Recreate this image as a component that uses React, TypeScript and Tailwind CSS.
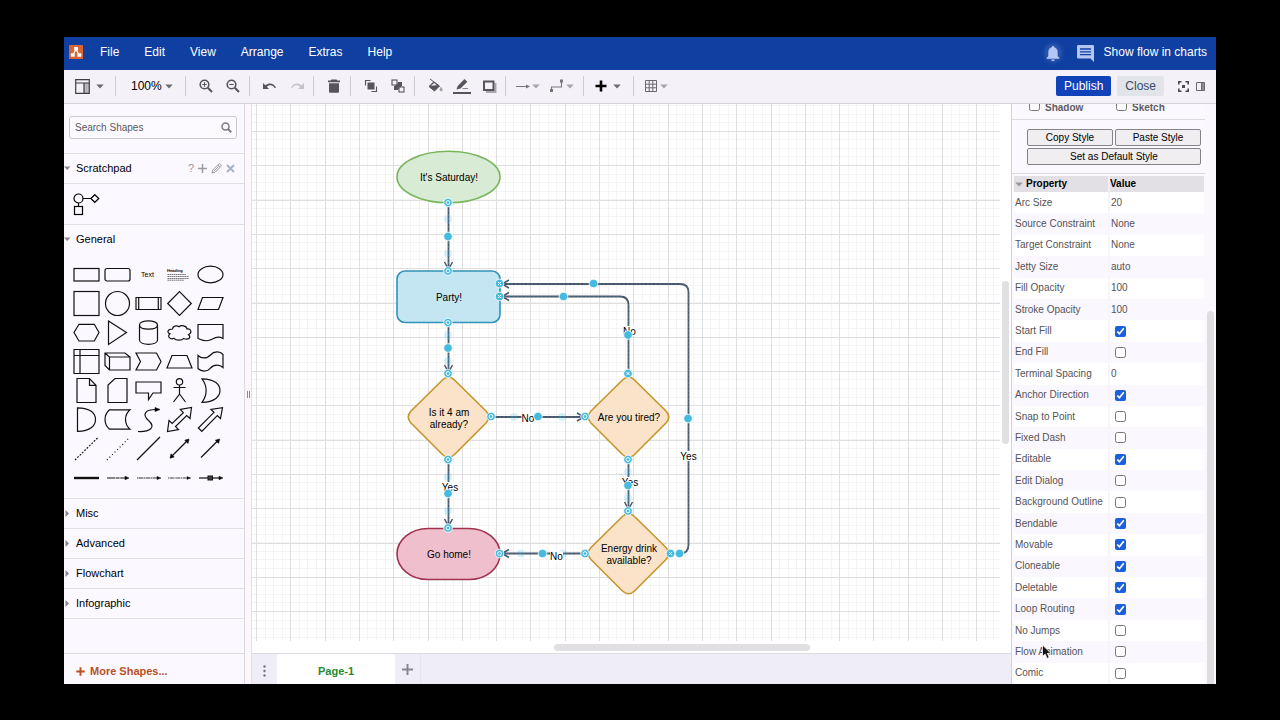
import { useState, type ReactNode } from 'react'

const FONT = "font-['Liberation_Sans',Arial,sans-serif]"

// ---------- data ----------

const MENUS = ['File', 'Edit', 'View', 'Arrange', 'Extras', 'Help']

type Property = { name: string; value: string | boolean }

const PROPERTIES: Property[] = [
  { name: 'Arc Size', value: '20' },
  { name: 'Source Constraint', value: 'None' },
  { name: 'Target Constraint', value: 'None' },
  { name: 'Jetty Size', value: 'auto' },
  { name: 'Fill Opacity', value: '100' },
  { name: 'Stroke Opacity', value: '100' },
  { name: 'Start Fill', value: true },
  { name: 'End Fill', value: false },
  { name: 'Terminal Spacing', value: '0' },
  { name: 'Anchor Direction', value: true },
  { name: 'Snap to Point', value: false },
  { name: 'Fixed Dash', value: false },
  { name: 'Editable', value: true },
  { name: 'Edit Dialog', value: false },
  { name: 'Background Outline', value: false },
  { name: 'Bendable', value: true },
  { name: 'Movable', value: true },
  { name: 'Cloneable', value: true },
  { name: 'Deletable', value: true },
  { name: 'Loop Routing', value: true },
  { name: 'No Jumps', value: false },
  { name: 'Flow Animation', value: false },
  { name: 'Comic', value: false },
]

// every shape is drawn in a 31x29 cell
const SHAPES: { name: string; art: ReactNode }[] = [
  { name: 'Rectangle', art: <rect x="3" y="8.5" width="25" height="12.5" /> },
  { name: 'Rounded Rectangle', art: <rect x="3" y="8.5" width="25" height="12.5" rx="2" /> },
  {
    name: 'Text',
    art: <text x="14.5" y="17" fontSize="7" textAnchor="middle" fill="#000" stroke="none">Text</text>,
  },
  {
    name: 'Textbox',
    art: (
      <>
        <text x="3" y="11.5" fontSize="4" fontWeight="bold" fill="#000" stroke="none">Heading</text>
        <path d="M3.5 14.5H22M3.5 16.5H25M3.5 18.5H25M3.5 20.2H20" strokeWidth=".9" strokeDasharray="1.6 .5" opacity=".65" />
      </>
    ),
  },
  { name: 'Ellipse', art: <ellipse cx="15.5" cy="14.5" rx="12.5" ry="8.3" /> },
  { name: 'Square', art: <rect x="3" y="2.5" width="25" height="24" /> },
  { name: 'Circle', art: <circle cx="15.5" cy="14.5" r="12" /> },
  { name: 'Process', art: <path d="M3 8.5H28V20.5H3ZM5.7 8.5V20.5M25.3 8.5V20.5" /> },
  { name: 'Diamond', art: <path d="M15.5 2.7 27.3 14.5 15.5 26.3 3.7 14.5Z" /> },
  { name: 'Parallelogram', art: <path d="M7.5 8.5H28L23.5 20.5H3Z" /> },
  { name: 'Hexagon', art: <path d="M8 6.3H23.3L28 14.5 23.3 23H8L3 14.5Z" /> },
  { name: 'Triangle', art: <path d="M6.5 3 24.5 14.5 6.5 26.5Z" /> },
  {
    name: 'Cylinder',
    art: <path d="M6.5 7V22C6.5 27.8 24.5 27.8 24.5 22V7C24.5 1.5 6.5 1.5 6.5 7C6.5 12.5 24.5 12.5 24.5 7" />,
  },
  {
    name: 'Cloud',
    art: <path d="M8.5 11C3.5 11 2.5 14.5 6 15.8C2.5 18.5 6.5 22 10 20.3C12 22.8 18 22.8 19.5 20.5C25 22.5 27.5 19 24.5 16.7C28.5 14.5 27 10.5 23 11C22.5 7.5 17 6.8 15 8.7C12.5 7 8.5 8 8.5 11Z" />,
  },
  { name: 'Document', art: <path d="M3 6.5H28V20.5C21.5 16.5 18 21.5 15.5 21.8C10 24.5 6 21.5 3 20.5Z" /> },
  { name: 'Internal Storage', art: <path d="M3 2.5H28V26.5H3ZM3 8.5H28M9 2.5V26.5" /> },
  { name: 'Cube', art: <path d="M3 6H23L28 10V23H7.5L3 18.5ZM3 6 7.5 10V23M7.5 10H28" /> },
  { name: 'Step', art: <path d="M3 6H23.5L28 14.5 23.5 23H3L7.5 14.5Z" /> },
  { name: 'Trapezoid', art: <path d="M8 8.5H23L28 21H3Z" /> },
  { name: 'Tape', art: <path d="M3 8.5C6 11.5 12 12 15.5 8C19 4 25 4 28 7.5V20.5C25 17.5 19 17 15.5 21C12 25.5 6 24.5 3 21.5Z" /> },
  { name: 'Note', art: <path d="M6 2.5H18.5L25 9.3V26.5H6ZM18.5 2.5V9.3H25" /> },
  { name: 'Card', art: <path d="M13 2.5H25V26.5H6V9Z" /> },
  { name: 'Callout', art: <path d="M3 6H28V17H20L15.5 23.5V17H3Z" /> },
  {
    name: 'Actor',
    art: (
      <>
        <circle cx="15.5" cy="5.8" r="3.2" />
        <path d="M15.5 9V18L9.5 26M15.5 18 21.5 26M9.5 11.5H21.5" />
      </>
    ),
  },
  { name: 'Or', art: <path d="M7 2.8C20 2.8 25 9 25 14.5C25 20 20 26.3 7 26.3C12.5 19 12.5 10 7 2.8Z" /> },
  { name: 'And', art: <path d="M6.5 2.8C20 2.8 24.5 9 24.5 14.5C24.5 20 20 26.3 6.5 26.3Z" /> },
  { name: 'Data Storage', art: <path d="M7.5 4.8H28C22 10 22 19 28 24.2H7.5C1.5 19 1.5 10 7.5 4.8Z" /> },
  {
    name: 'Curve',
    art: (
      <>
        <path d="M5 26.5C17 27 23.5 22.5 15.5 15.5C8.5 9 12.5 4.5 23 4.5" />
        <path d="M22 2.5 27 4.5 22 6.5Z" fill="#000" strokeWidth=".6" />
      </>
    ),
  },
  { name: 'Bidirectional Arrow', art: <path d="M27.5 2.5 26 13.5 22.7 10.5 11.5 21.5 14.5 24.5 3.5 26.5 5 15.5 8.2 18.5 19.3 7.7 16.3 4.5Z" /> },
  { name: 'Arrow', art: <path d="M27.5 2.7 25.5 13.5 22.3 10.5 6.8 26.3 3.3 23 19 7.3 16 4.5Z" /> },
  { name: 'Dashed Line', art: <path d="M4 26 27 3.5" strokeDasharray="1.8 1.5" /> },
  { name: 'Dotted Line', art: <path d="M5 26 27 4" strokeDasharray="1 2.6" /> },
  { name: 'Line', art: <path d="M4 26 27 3" /> },
  {
    name: 'Bidirectional Connector',
    art: (
      <>
        <path d="M7 23 24 6" />
        <path d="M25 5 24 9.4 20.8 6.2ZM6 24.2 7 19.8 10.2 23Z" fill="#000" strokeWidth=".6" />
      </>
    ),
  },
  {
    name: 'Directional Connector',
    art: (
      <>
        <path d="M6 23.5 23.5 6" />
        <path d="M24.7 5 23.5 9.4 20.3 6.2Z" fill="#000" strokeWidth=".6" />
      </>
    ),
  },
  { name: 'Link', art: <path d="M3 15H28" strokeWidth="2.4" /> },
  {
    name: 'Connector with Label',
    art: (
      <>
        <path d="M5 15H24" strokeDasharray="8 .6 4 .6" />
        <path d="M23 13.2 27 15 23 16.8Z" fill="#000" strokeWidth=".5" />
      </>
    ),
  },
  {
    name: 'Connector with 2 Labels',
    art: (
      <>
        <path d="M4 15H24" strokeDasharray="1 .5 5 .5" opacity=".85" />
        <path d="M24 13.4 28 15 24 16.6Z" fill="#000" strokeWidth=".5" />
      </>
    ),
  },
  {
    name: 'Connector with 3 Labels',
    art: (
      <>
        <path d="M4 15H27" strokeDasharray="1.2 .6 4 .6" opacity=".8" />
        <path d="M23 13.6 26 15 23 16.4Z" fill="#000" strokeWidth=".5" />
      </>
    ),
  },
  {
    name: 'Connector with Symbol',
    art: (
      <>
        <path d="M4 15H24" />
        <rect x="13" y="13" width="4.5" height="4" fill="#444" strokeWidth="1" />
        <path d="M24 13.2 28 15 24 16.8Z" fill="#000" strokeWidth=".5" />
      </>
    ),
  },
]

// ---------- small pieces ----------

function Caret({ className = 'text-[#6b6a6e]' }: { className?: string }) {
  return (
    <svg width="8" height="5" viewBox="0 0 8 5" className={`shrink-0 ${className}`} fill="currentColor">
      <path d="M0.3 0.4H7.7L4 4.6Z" />
    </svg>
  )
}

function Separator() {
  return <div className="ml-[3px] mr-[6px] h-5 w-px shrink-0 bg-[#cfcbd1]" />
}

function ToolButton({ label, children }: { label: string; children: ReactNode }) {
  return (
    <button aria-label={label} className="flex h-6 w-[27px] shrink-0 items-center justify-center text-[#56555a]">
      <svg width="18" height="18" viewBox="0 0 18 18" fill="none" stroke="currentColor">
        {children}
      </svg>
    </button>
  )
}

function Header() {
  return (
    <header className="flex h-[33px] shrink-0 items-center bg-[#0f3fa0] pb-[3px] pl-[5px] pr-[9px] text-xs text-white">
      <svg width="14" height="14" viewBox="0 0 14 14">
        <rect width="14" height="14" rx="1" fill="#d96532" />
        <path d="M7 4 4 10M7 4 10 10" stroke="#fff" strokeWidth="1.2" />
        <rect x="5.2" y="2" width="3.8" height="3.6" rx=".5" fill="#fff" />
        <rect x="1.8" y="8.2" width="3.9" height="3.6" rx=".5" fill="#fff" />
        <rect x="8.4" y="8.2" width="3.9" height="3.6" rx=".5" fill="#fff" />
      </svg>
      <nav className="ml-[17px] flex gap-[25px]">
        {MENUS.map((menu) => (
          <button key={menu}>{menu}</button>
        ))}
      </nav>
      <div className="ml-auto flex items-center">
        <button aria-label="Notifications" className="mt-[2px] rounded-full bg-[#4a72c4]/40 shadow-[0_0_4px_1px_#4a72c466]">
          <svg width="16" height="18" viewBox="0 0 16 18" fill="#b4c6f2">
            <path d="M8 2c.9 0 1.3.6 1.3 1.3C11.7 4 12.7 6 12.7 8.3V12.2L14.5 14V14.8H1.5V14L3.3 12.2V8.3C3.3 6 4.3 4 6.7 3.3 6.7 2.6 7.1 2 8 2ZM6.3 15.5H9.7C9.7 17.6 6.3 17.6 6.3 15.5Z" />
          </svg>
        </button>
        <button aria-label="Comments" className="ml-4 mt-[2px]">
          <svg width="17" height="17" viewBox="0 0 17 17">
            <path d="M1.2 0H15.8Q17 0 17 1.2V17L13.5 13.5H1.2Q0 13.5 0 12.3V1.2Q0 0 1.2 0Z" fill="#b4c6f2" />
            <path d="M3 4H14M3 6.8H14M3 9.6H14" stroke="#0f3fa0" strokeWidth="1.3" />
          </svg>
        </button>
        <span className="ml-[10px]">Show flow in charts</span>
      </div>
    </header>
  )
}

function Toolbar() {
  return (
    <div className="flex h-[34px] shrink-0 items-center border-b border-[#d4d1d6] bg-[#f5f1f8] pb-px pr-[11px]">
      <button aria-label="View layout" className="flex h-6 w-12 shrink-0 items-center gap-[6px] pl-[11px]">
        <svg width="15" height="15" viewBox="0 0 15 15" fill="none" stroke="#3f3e42" strokeWidth="1.2">
          <rect x="9" y="4" width="5" height="10" fill="#b9b7bc" stroke="none" />
          <path d="M.7.7H14.3V14.3H.7ZM.7 4H14.3M9 4V14.3" />
        </svg>
        <Caret />
      </button>
      <Separator />
      <button className="flex h-6 w-[60px] shrink-0 items-center gap-[3px] pl-[9px] text-xs text-black">
        100%
        <Caret />
      </button>
      <Separator />
      <ToolButton label="Zoom In">
        <circle cx="7.5" cy="7.5" r="4.3" strokeWidth="1.6" />
        <path d="M10.8 10.8 15 15" strokeWidth="2" />
        <path d="M5.3 7.5H9.7M7.5 5.3V9.7" strokeWidth="1.1" />
      </ToolButton>
      <ToolButton label="Zoom Out">
        <circle cx="7.5" cy="7.5" r="4.3" strokeWidth="1.6" />
        <path d="M10.8 10.8 15 15" strokeWidth="2" />
        <path d="M5.3 7.5H9.7" strokeWidth="1.1" />
      </ToolButton>
      <Separator />
      <ToolButton label="Undo">
        <path d="M2 6V12H8L5.8 9.8C9 7.3 12 8 13.8 11.2L15 10.6C13 6.5 8.5 5 4.3 8.3Z" fill="currentColor" stroke="none" />
      </ToolButton>
      <ToolButton label="Redo">
        <path d="M16 6V12H10L12.2 9.8C9 7.3 6 8 4.2 11.2L3 10.6C5 6.5 9.5 5 13.7 8.3Z" fill="#c6c3c9" stroke="none" />
      </ToolButton>
      <Separator />
      <ToolButton label="Delete">
        <path d="M6.5 2.5H11.5L12.3 3.5H15V5.3H3V3.5H5.7ZM4 6.3H14V14.5Q14 15.7 12.8 15.7H5.2Q4 15.7 4 14.5Z" fill="currentColor" stroke="none" />
      </ToolButton>
      <Separator />
      <ToolButton label="To Front">
        <path d="M8.5 3.5H3.5V8.5M9.5 14.5H14.5V9.5" strokeWidth="1.1" />
        <rect x="5.5" y="5.5" width="7" height="7" fill="currentColor" stroke="none" />
      </ToolButton>
      <ToolButton label="To Back">
        <path d="M9 6H12V9M6 9V12H9" strokeWidth="2" />
        <rect x="6.5" y="6.5" width="5.5" height="5.5" fill="currentColor" stroke="none" />
        <rect x="3" y="3" width="5" height="5" fill="#f5f1f8" strokeWidth="1.1" />
        <rect x="10" y="10" width="5" height="5" fill="#f5f1f8" strokeWidth="1.1" />
      </ToolButton>
      <Separator />
      <ToolButton label="Fill Color">
        <path d="M4 2 7.8 4.8 13.5 9 8.5 14 3 9.5 7.8 4.8" fill="currentColor" strokeWidth="1" />
        <path d="M5 8.7 8 5.9 10.8 8.2Z" fill="#f5f1f8" stroke="none" />
        <path d="M15 9.5C17.5 13 17 14.3 15.2 14.3S13 13 15 9.5Z" fill="#a5a3a9" stroke="none" />
      </ToolButton>
      <ToolButton label="Line Color">
        <path d="M3.5 12.5 4.7 9 11.5 2 14.3 4.7 7.5 11.5Z" fill="currentColor" stroke="none" />
        <path d="M9.5 11.5H15" strokeWidth=".7" />
        <path d="M0 16H18" strokeWidth="2" />
      </ToolButton>
      <ToolButton label="Shadow">
        <path d="M6 15H15.5V6" strokeWidth="2" stroke="#a9a7ac" />
        <rect x="4" y="4.5" width="9.5" height="8.5" strokeWidth="2" />
      </ToolButton>
      <Separator />
      <button aria-label="Connection" className="flex h-6 w-[34px] shrink-0 items-center gap-px pl-[3px]">
        <svg width="16" height="14" viewBox="0 0 16 14" stroke="#77757a" fill="#77757a">
          <path d="M1 7.5H11" />
          <path d="M11 5.5 15 7.5 11 9.5Z" stroke="none" />
        </svg>
        <Caret className="text-[#a7a4aa]" />
      </button>
      <button aria-label="Waypoints" className="flex h-6 w-[34px] shrink-0 items-center gap-px pl-[3px]">
        <svg width="16" height="14" viewBox="0 0 16 14" stroke="#77757a" fill="none">
          <path d="M2.5 11V8H12.5V3" strokeWidth="1.1" />
          <rect x="1.5" y="10.5" width="2" height="2" fill="#77757a" />
          <rect x="11.5" y="1" width="2" height="2" fill="#77757a" />
        </svg>
        <Caret className="text-[#a7a4aa]" />
      </button>
      <Separator />
      <button aria-label="Insert" className="flex h-6 w-10 shrink-0 items-center gap-[6px] pl-[5px]">
        <svg width="12" height="12" viewBox="0 0 12 12" stroke="#000" strokeWidth="2.6">
          <path d="M6 .5V11.5M.5 6H11.5" />
        </svg>
        <Caret />
      </button>
      <Separator />
      <button aria-label="Table" className="flex h-6 w-10 shrink-0 items-center gap-[3px] pl-[5px]">
        <svg width="12" height="12" viewBox="0 0 12 12" stroke="#6b6a6e" fill="none">
          <path d="M.5.5H11.5V11.5H.5ZM4.2.5V11.5M7.8.5V11.5M.5 4.2H11.5M.5 7.8H11.5" />
        </svg>
        <Caret className="text-[#a7a4aa]" />
      </button>
      <div className="ml-auto flex items-center">
        <button className="h-5 rounded-[2px] bg-[#1142b8] px-2 text-xs text-white">Publish</button>
        <button className="ml-[6px] h-5 rounded-[2px] bg-[#e1e5ea] px-2 text-xs text-[#3b4a66]">Close</button>
        <button aria-label="Fullscreen" className="ml-[14px]">
          <svg width="11" height="11" viewBox="0 0 11 11" fill="none" stroke="#4a494d" strokeWidth="1.6">
            <path d="M.8 3.5V.8H3.5M7.5.8H10.2V3.5M10.2 7.5V10.2H7.5M3.5 10.2H.8V7.5" />
            <rect x="4" y="4" width="3" height="3" fill="#4a494d" stroke="none" />
          </svg>
        </button>
        <button aria-label="Format panel" className="ml-[7px]">
          <svg width="9" height="9" viewBox="0 0 9 9" fill="none" stroke="#6a696d">
            <rect x="5.5" y="1" width="3" height="7" fill="#8d8b91" stroke="none" />
            <path d="M.5.5H8.5V8.5H.5ZM5.5.5V8.5" />
          </svg>
        </button>
      </div>
    </div>
  )
}

function SectionTitle({ title, open = false }: { title: string; open?: boolean }) {
  return (
    <button className="flex h-[29px] flex-1 items-center text-[11px] text-black">
      <svg width="7" height="7" viewBox="0 0 7 7" fill="#88868b">
        {open ? <path d="M0 1.5H6.5L3.2 5Z" /> : <path d="M1.500 0 5 3.5 1.5 7Z" />}
      </svg>
      <span className="ml-[5px]">{title}</span>
    </button>
  )
}

function Sidebar() {
  return (
    <aside className="flex w-[181px] shrink-0 flex-col border-r border-[#dcd8de] bg-[#fcf8ff]">
      <div className="border-b border-[#e2dee5] px-[5px] pb-[14px] pt-3">
        <div className="mr-[2px] flex h-[23px] items-center rounded-[3px] border border-[#c9c6cc] bg-[#fdfaff] pl-[5px] pr-1">
          <input
            type="search"
            aria-label="Search Shapes"
            placeholder="Search Shapes"
            className="min-w-0 flex-1 bg-transparent text-[10px] outline-none placeholder:text-[#59585c]"
          />
          <svg width="11" height="11" viewBox="0 0 11 11" fill="none" stroke="#7b797e">
            <circle cx="4.5" cy="4.5" r="3.5" strokeWidth="1.5" />
            <path d="M7 7 10.2 10.2" strokeWidth="2" />
          </svg>
        </div>
      </div>
      <div className="flex items-center border-b border-[#e2dee5] pr-[9px]">
        <SectionTitle title="Scratchpad" open />
        <div className="flex items-center gap-1 text-[#9b989e]">
          <button aria-label="Help" className="text-[11px]">?</button>
          <button aria-label="Add">
            <svg width="9" height="9" viewBox="0 0 9 9" stroke="currentColor" strokeWidth="1.5">
              <path d="M4.5 0V9M0 4.5H9" />
            </svg>
          </button>
          <button aria-label="Edit">
            <svg width="11" height="11" viewBox="0 0 11 11" fill="none" stroke="currentColor">
              <path d="M1 10 1.7 7 7.7 1Q8.5.4 9.5 1.3T10 3.3L4 9.3ZM7 2 9 4M2.7 8.3 7.5 3.5" />
            </svg>
          </button>
          <button aria-label="Close scratchpad">
            <svg width="9" height="9" viewBox="0 0 9 9" stroke="#a9b3c6" strokeWidth="2">
              <path d="M1 1 8 8M8 1 1 8" />
            </svg>
          </button>
        </div>
      </div>
      <button aria-label="Scratchpad shape" className="flex h-[41px] shrink-0 items-center border-b border-[#e2dee5] pl-[9px]">
        <svg width="27" height="23" viewBox="0 0 27 23" fill="none" stroke="#000" strokeWidth="1.2">
          <circle cx="5.5" cy="5.5" r="4.5" />
          <path d="M10 5.5H17.5M5.5 10V13.5M21.8 1.7 25.8 5.5 21.8 9.3 17.8 5.5Z" />
          <rect x="1.5" y="13.5" width="8" height="8" />
        </svg>
      </button>
      <div className="flex shrink-0">
        <SectionTitle title="General" open />
      </div>
      <div className="grid grid-cols-[repeat(5,31px)] border-b border-[#e2dee5] py-[6px] pl-[7px]">
        {SHAPES.map((shape) => (
          <button key={shape.name} aria-label={shape.name}>
            <svg width="31" height="29" viewBox="0 0 31 29" fill="none" stroke="#111" strokeWidth="1.2">
              {shape.art}
            </svg>
          </button>
        ))}
      </div>
      {['Misc', 'Advanced', 'Flowchart', 'Infographic'].map((title) => (
        <div key={title} className="flex shrink-0 border-b border-[#e2dee5]">
          <SectionTitle title={title} />
        </div>
      ))}
      <button className="mt-auto flex h-[31px] shrink-0 items-center gap-[5px] border-t border-[#dcd8de] pl-3 pt-1 text-[11px] font-bold text-[#b8501f]">
        <svg width="9" height="9" viewBox="0 0 9 9" stroke="currentColor" strokeWidth="1.9">
          <path d="M4.5 .3V8.7M.3 4.5H8.7" />
        </svg>
        More Shapes...
      </button>
    </aside>
  )
}

// ---------- canvas ----------

const GRID = 34.3
const INK = '#4b5568'
const BLUE = '#46bbe0'

const EDGES = [
  'M196.5 98V163',
  'M196.5 218V266',
  'M196.5 355V420',
  'M239 313H330',
  'M376.5 355V403',
  'M333 449.5H252',
  'M376.5 270V201Q376.5 192.5 368 192.5H252',
  'M419 449.5H428Q436.5 449.5 436.5 441V188Q436.5 180 428 180H252',
]

const HEADS = [
  'M192.5 158 196.5 165 200.5 158',
  'M192.5 261 196.5 268 200.5 261',
  'M192.5 415 196.5 422 200.5 415',
  'M325 309 332 313 325 317',
  'M372.5 398 376.5 405 380.5 398',
  'M257 445.5 250 449.5 257 453.5',
  'M257 188.5 250 192.5 257 196.5',
  'M257 176 250 180 257 184',
]

const LABELS = [
  { x: 276, y: 314.5, text: 'No' },
  { x: 304.5, y: 452.5, text: 'No' },
  { x: 377.5, y: 227, text: 'No' },
  { x: 198, y: 383, text: 'Yes' },
  { x: 378, y: 378, text: 'Yes' },
  { x: 436.5, y: 352, text: 'Yes' },
]

const GHOSTS = [
  [196, 115], [196, 149.5], [196, 231], [196, 257], [196, 373], [196, 407],
  [262, 313], [310, 313], [376, 368], [376, 394], [269, 449.5], [311, 449.5],
]

const DOTS = [
  [196, 132.5], [196, 244], [196, 389.5], [286, 312.5], [376, 231], [436, 314.5],
  [341.5, 179.5], [311.5, 192.5], [290.5, 449.5], [427.5, 449.5], [376, 381.5],
]

const RINGS = [
  [196, 98.5], [196, 167], [196, 218.5], [196, 269.5], [196, 355.5], [196, 424],
  [239, 312.5], [333, 312.5], [376, 355.5], [376, 407], [333, 449.5], [247.5, 449.5],
]

const CROSSES = [
  [247.5, 179.5], [247.5, 192.5], [376, 269.5], [418.5, 449.5],
]

function Diamond({ cx, cy }: { cx: number; cy: number }) {
  return (
    <path
      transform={`translate(${cx} ${cy})`}
      d="M-6 -37Q0 -43 6 -37L37.5 -6Q43 0 37.5 6L6 37.5Q0 43 -6 37.5L-37.5 6Q-43 0 -37.5 -6Z"
      fill="#fae3c8"
      stroke="#c4962c"
      strokeWidth="1.6"
    />
  )
}

function Diagram() {
  const cols = Array.from({ length: 80 }, (_, i) => Math.round(4 + i * GRID) + 0.5)
  const rows = Array.from({ length: 60 }, (_, i) => Math.round(27 + (i - 1) * GRID) + 0.5)
  const minor = Array.from({ length: 300 }, (_, i) => i * (GRID / 4))

  return (
    <svg className="h-full w-full" fontSize="10">
      <rect width="100%" height="100%" fill="#fff" />
      <g stroke="#f5f4f5">
        {minor.map((v) => (
          <line key={`mx${v}`} x1={Math.round(4 + v) + 0.5} x2={Math.round(4 + v) + 0.5} y1="0" y2="100%" />
        ))}
        {minor.map((v) => (
          <line key={`my${v}`} x1="0" x2="100%" y1={Math.round(v + 1) + 0.5} y2={Math.round(v + 1) + 0.5} />
        ))}
      </g>
      <g stroke="#dfdee0">
        {cols.map((x) => (
          <line key={`x${x}`} x1={x} x2={x} y1="0" y2="100%" />
        ))}
        {rows.map((y) => (
          <line key={`y${y}`} x1="0" x2="100%" y1={y} y2={y} />
        ))}
      </g>

      {/* nodes */}
      <ellipse cx="196.5" cy="73" rx="51.5" ry="25.7" fill="#d7ebd5" stroke="#79b65b" strokeWidth="1.6" />
      <rect x="145" y="167" width="103" height="51.5" rx="8" fill="#c4e6f2" stroke="#3193b8" strokeWidth="1.6" />
      <rect x="145" y="424.5" width="103" height="51" rx="31" ry="25.5" fill="#f0bfcd" stroke="#a03350" strokeWidth="1.6" />
      <Diamond cx={196.5} cy={313} />
      <Diamond cx={376.5} cy={313} />
      <Diamond cx={376.5} cy={449.5} />

      {/* edges, drawn as selected */}
      <g fill="none">
        {EDGES.map((d) => (
          <path key={d} d={d} stroke={INK} strokeWidth="1.8" />
        ))}
        {EDGES.map((d) => (
          <path key={`s${d}`} d={d} stroke="#4d93b3" strokeWidth="1" strokeDasharray="2 2" opacity=".45" />
        ))}
        {HEADS.map((d) => (
          <path key={d} d={d} stroke={INK} strokeWidth="1.5" />
        ))}
      </g>

      {GHOSTS.map(([x, y]) => (
        <circle key={`g${x}-${y}`} cx={x} cy={y} r="4" fill={BLUE} opacity=".2" />
      ))}

      <g textAnchor="middle">
        {LABELS.map((l) => (
          <g key={`${l.x}-${l.y}`}>
            <rect x={l.x - (l.text === 'No' ? 6.5 : 8)} y={l.y - 5} width={l.text === 'No' ? 13 : 16} height="10" fill="#fff" />
            <text x={l.x} y={l.y + 3.5}>{l.text}</text>
          </g>
        ))}
        <text x="197" y="77">It's Saturday!</text>
        <text x="197" y="197">Party!</text>
        <text x="197" y="311.5">Is it 4 am</text>
        <text x="197" y="323.5">already?</text>
        <text x="377" y="317">Are you tired?</text>
        <text x="377" y="448">Energy drink</text>
        <text x="377" y="460">available?</text>
        <text x="197" y="454">Go home!</text>
      </g>

      {/* handles */}
      {DOTS.map(([x, y]) => (
        <circle key={`d${x}-${y}`} cx={x} cy={y} r="4.3" fill={BLUE} stroke="#fff" strokeWidth=".8" />
      ))}
      {RINGS.map(([x, y]) => (
        <g key={`r${x}-${y}`}>
          <circle cx={x} cy={y} r="4.3" fill={BLUE} stroke="#fff" strokeWidth=".8" />
          <circle cx={x} cy={y} r="1.9" fill="none" stroke="#fff" strokeWidth="1" />
        </g>
      ))}
      {CROSSES.map(([x, y]) => (
        <g key={`c${x}-${y}`}>
          <circle cx={x} cy={y} r="4.3" fill={BLUE} stroke="#fff" strokeWidth=".8" />
          <path d={`M${x - 1.6} ${y - 1.6}l3.2 3.2m0 -3.2l-3.2 3.2`} stroke="#fff" strokeWidth="1" />
        </g>
      ))}
    </svg>
  )
}

function Canvas() {
  return (
    <main className="flex min-w-0 flex-1 flex-col bg-white">
      <div className="flex min-h-0 flex-1">
        <div className="min-w-0 flex-1 overflow-hidden">
          <Diagram />
        </div>
        <div className="w-[11px] shrink-0 pl-[2px]">
          <div className="mt-[177px] h-[163px] w-[7px] rounded-full bg-[#e2dfe2]" />
        </div>
      </div>
      <div className="h-3 shrink-0 pt-[3px]">
        <div className="ml-[302px] h-[7px] w-64 rounded-full bg-[#e2dfe2]" />
      </div>
      <footer className="flex h-[31px] shrink-0 items-stretch border-t border-[#dddbe2] bg-[#efeef6]">
        <button aria-label="Pages" className="flex w-[25px] items-center justify-center pt-1">
          <svg width="3" height="12" viewBox="0 0 3 12" fill="#77757a">
            <circle cx="1.5" cy="1.5" r="1.2" />
            <circle cx="1.5" cy="6" r="1.2" />
            <circle cx="1.5" cy="10.5" r="1.2" />
          </svg>
        </button>
        <button className="w-[118px] bg-white pt-1 text-[11px] font-bold text-[#228a35]">Page-1</button>
        <button aria-label="Insert page" className="flex w-[26px] items-center justify-center border-r border-[#e6e4ec]">
          <svg width="11" height="11" viewBox="0 0 11 11" stroke="#89878c" strokeWidth="2">
            <path d="M5.5 0V11M0 5.5H11" />
          </svg>
        </button>
      </footer>
    </main>
  )
}

// ---------- format panel ----------

function StyleButton({ children, className = '' }: { children: ReactNode; className?: string }) {
  return (
    <button className={`h-[17px] rounded-[2px] border border-[#858388] bg-[#f0eef1] text-[10px] text-black ${className}`}>
      {children}
    </button>
  )
}

function FormatPanel() {
  const [values, setValues] = useState(PROPERTIES)

  const toggle = (name: string) =>
    setValues((prev) => prev.map((p) => (p.name === name ? { ...p, value: !p.value } : p)))

  return (
    <aside className="flex w-[205px] shrink-0 overflow-hidden border-l border-[#d4d1d6] bg-[#fcf8ff]">
      <div className="flex min-w-0 flex-1 flex-col">
        <div className="flex h-4 shrink-0 border-b border-[#dcd8de] pl-[17px] text-[10px] font-bold text-[#5e5c61]">
          {['Shadow', 'Sketch'].map((name) => (
            <label key={name} className="-mt-[3px] flex h-[14px] w-[87px] items-end gap-[5px] leading-[14px]">
              <input type="checkbox" className="mb-1 h-[11px] w-[11px]" />
              {name}
            </label>
          ))}
        </div>
        <div className="grid shrink-0 grid-cols-2 gap-[2px] border-b border-[#dcd8de] pb-2 pl-[15px] pr-1 pt-[9px]">
          <StyleButton>Copy Style</StyleButton>
          <StyleButton>Paste Style</StyleButton>
          <StyleButton className="col-span-2">Set as Default Style</StyleButton>
        </div>
        <div className="min-h-0 flex-1 pl-[2px] pr-px pt-[2px]">
          <table className="h-full w-full table-fixed border-collapse text-left text-[10px] leading-[14px] text-[#555358]">
            <thead>
              <tr className="h-4 bg-[#e3e0e5] text-black">
                <th className="w-[95px] border-r-2 border-[#f3eff6] p-0">
                  <span className="flex items-center gap-[3px] pl-px">
                    <Caret className="text-[#99979c]" />
                    Property
                  </span>
                </th>
                <th className="p-0">Value</th>
              </tr>
            </thead>
            <tbody>
              {values.map((p) => (
                <tr key={p.name} className="odd:bg-white even:bg-[#fbf7fe]">
                  <td className="relative whitespace-nowrap border-r-2 border-[#f8f4fb] p-0 pl-px">
                    {p.name}
                    {p.name === 'Flow Animation' && (
                      <svg width="11" height="16" viewBox="0 0 11 16" className="absolute left-[27px] top-[3px]">
                        <path d="M1.5 1V12.5L4.2 10 6 14.5 8.2 13.6 6.4 9.3H10Z" fill="#111" stroke="#fff" strokeWidth=".8" />
                      </svg>
                    )}
                  </td>
                  <td className="p-0 pl-px">
                    {typeof p.value === 'boolean' ? (
                      <input
                        type="checkbox"
                        aria-label={p.name}
                        checked={p.value}
                        onChange={() => toggle(p.name)}
                        className="ml-1 block h-[11px] w-[11px] accent-[#1a5fdc]"
                      />
                    ) : (
                      p.value
                    )}
                  </td>
                </tr>
              ))}
            </tbody>
          </table>
        </div>
      </div>
      <div className="flex w-[11px] shrink-0 flex-col items-center bg-[#fbf8fd]">
        <div className="mt-[207px] w-[7px] flex-1 rounded-t-full bg-[#e0dde1]" />
      </div>
    </aside>
  )
}

export default function App() {
  return (
    <div className={`h-screen bg-black px-16 pb-9 pt-[37px] ${FONT}`}>
      <div className="flex h-full flex-col overflow-hidden bg-white">
        <Header />
        <Toolbar />
        <div className="flex min-h-0 flex-1">
          <Sidebar />
          <div className="flex w-[7px] shrink-0 items-center justify-center border-r border-[#e4e1e6] bg-[#fbf7fd]">
            <div className="h-[7px] w-[3px] border-x border-[#8b898e]" />
          </div>
          <Canvas />
          <FormatPanel />
        </div>
      </div>
    </div>
  )
}
